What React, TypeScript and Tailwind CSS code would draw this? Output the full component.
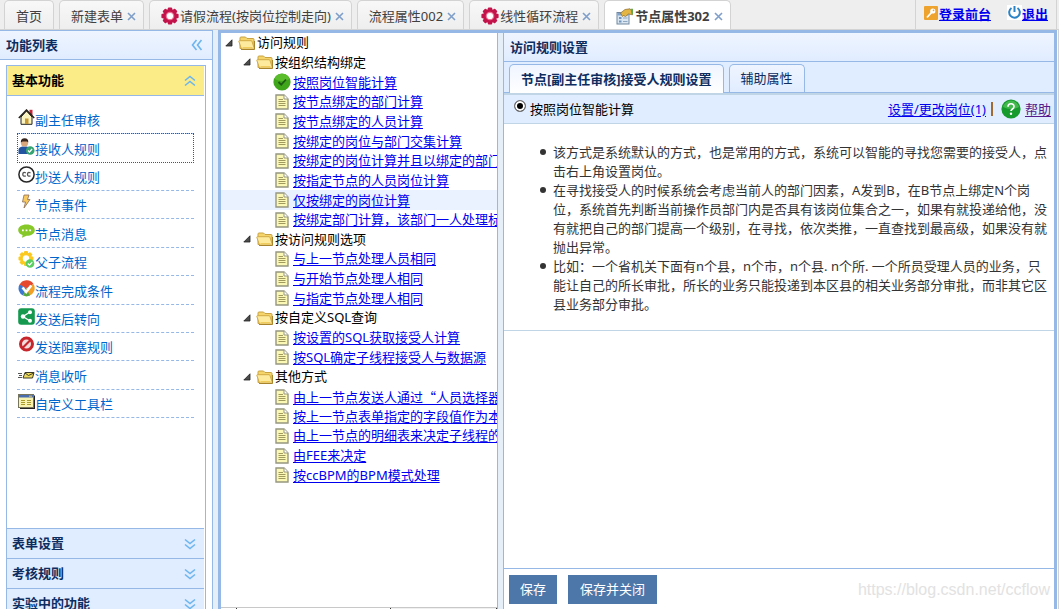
import type { ReactNode } from "react";

function Gear() {
  return (
    <svg viewBox="0 0 18 18" className="h-[18px] w-[18px] shrink-0" aria-hidden="true">
      <g fill="#c3134b">
        {[0, 45, 90, 135].map((a) => (
          <rect key={a} x="6.8" y="0.4" width="4.4" height="17.2" rx="1" transform={`rotate(${a} 9 9)`} />
        ))}
        <circle cx="9" cy="9" r="7" />
      </g>
      <circle cx="9" cy="9" r="4.3" fill="#ee7397" />
      <circle cx="9" cy="9" r="3.1" fill="#fff" />
    </svg>
  );
}

function PropertyIcon() {
  return (
    <svg viewBox="0 0 17 17" className="h-[17px] w-[17px] shrink-0" aria-hidden="true">
      <rect x="1" y="4.500" width="12" height="11.500" fill="#dbe6f3" stroke="#71879f" />
      <rect x="1.500" y="5" width="11" height="2.500" fill="#7fa3d0" />
      <path d="M3 9h2.500v2H3zM3 12.500h2.500v2H3z" fill="#6f95bf" />
      <path d="M7 10h4.500M7 13.500h4.500" stroke="#8fa8c2" />
      <path d="M4.500 5L9 1.500 14 .8l2.500 3v3l-4-.8-3 2.500-2-1-1 1z" fill="#e3b545" stroke="#8a6a2b" strokeWidth=".7" />
      <path d="M14.500.8H17v5.400h-1.500z" fill="#65a84b" />
    </svg>
  );
}

function CloseX() {
  return (
    <svg viewBox="0 0 9 9" className="h-[9px] w-[9px]" aria-hidden="true">
      <path d="M1 1l7 7M8 1L1 8" stroke="#7f9fca" strokeWidth="1.6" />
    </svg>
  );
}

function Chevrons({ turn = "" }: { turn?: string }) {
  return (
    <svg viewBox="0 0 12 12" className={`h-3 w-3 ${turn}`} fill="none" stroke="#6cb5ee" strokeWidth="1.6" aria-hidden="true">
      <path d="M1 1.500l5 4 5-4M1 6.500l5 4 5-4" />
    </svg>
  );
}

function Folder() {
  return (
    <svg viewBox="0 0 18 16" className="h-4 w-[18px] shrink-0" aria-hidden="true">
      <path d="M2 13.500V3q0-1 1-1h4.500l1.500 1.500h6q1 0 1 1V13z" fill="#f5d469" stroke="#c9a243" />
      <path d="M.8 6.300q0-.6.600-.6H13q.8 0 1 .8L16.500 14H3.500z" fill="#fdea9c" stroke="#d0aa46" />
      <path d="M4.500 12.500h10" stroke="#f0cc5c" />
      <path d="M3 14.500h13.500V6" fill="none" stroke="#a8842c" />
    </svg>
  );
}

function FileIcon() {
  return (
    <svg viewBox="0 0 14 16" className="mx-0.5 h-4 w-[14px] shrink-0" aria-hidden="true">
      <path d="M1 1h8L13 5v10H1z" fill="#fbf7b4" stroke="#97977f" strokeWidth="1.4" />
      <path d="M9 1v4h4" fill="#fff" stroke="#97977f" />
      <path d="M3.500 5.500H8M3.500 7.500h7M3.500 9.500h7M3.500 11.500h7" stroke="#968f55" strokeWidth=".9" />
    </svg>
  );
}

function OkIcon() {
  return (
    <svg viewBox="0 0 18 18" className="h-[18px] w-[18px] shrink-0" aria-hidden="true">
      <circle cx="9" cy="9" r="8.600" fill="#3fa51a" />
      <path d="M1.500 6a8 8 0 0 1 15 0q-7.500 4-15 0z" fill="#5bbd2c" />
      <path d="M5.500 9l2.700 2.700L13 6.500" fill="none" stroke="#1d5c12" strokeWidth="1.800" />
    </svg>
  );
}

const menu: { text: string; icon: ReactNode }[] = [
  {
    text: "副主任审核",
    icon: (
      <>
        <path d="M11.500.8h3v6h-3z" fill="#c2253a" />
        <path d="M3 8l5.500-6L14 8v7.300H3z" fill="#fbf3c0" stroke="#222" />
        <path d="M.8 9l7.700-8 7.700 8" fill="none" stroke="#27221c" strokeWidth="1.500" />
        <path d="M7 9.500h3.500V15H7z" fill="#c89a36" />
      </>
    ),
  },
  {
    text: "接收人规则",
    icon: (
      <>
        <path d="M.5 16V12q0-3 4-3.500h4Q12.500 9 12.500 13v3z" fill="#2454a0" />
        <circle cx="6.500" cy="5" r="3.600" fill="#d9a77c" />
        <path d="M2.800 4.500Q2.800.3 6.600.3t3.700 4.200L9 3.500H4.500z" fill="#34241c" />
        <circle cx="12.200" cy="12.500" r="4.300" fill="#35a372" />
        <path d="M10 12.500l1.500 1.500 2.600-3" fill="none" stroke="#fff" strokeWidth="1.200" />
      </>
    ),
  },
  {
    text: "抄送人规则",
    icon: (
      <>
        <circle cx="8.500" cy="8.500" r="7.600" fill="#fff" stroke="#262626" strokeWidth="1.500" />
        <path d="M7.800 6.800q-3-1.200-3 1.500t3 1.500M12.500 6.800q-3-1.200-3 1.500t3 1.500" fill="none" stroke="#555" strokeWidth="1.300" />
      </>
    ),
  },
  {
    text: "节点事件",
    icon: <path d="M6 1h5L9.500 5.500H12L6 14l1.500-6H4.500z" fill="#f8c95e" stroke="#8b6c55" strokeWidth=".8" />,
  },
  {
    text: "节点消息",
    icon: (
      <>
        <path d="M8.500 1.500c5 0 8.300 2.300 8.300 5.700s-3.500 5.600-8.300 5.600l-4.500 2 .6-2.700C2 11.300.2 9.500.2 7.200c0-3.400 3.300-5.700 8.300-5.700z" fill="#86c827" />
        <path d="M4 6.500h1.800v1.800H4zM7.600 6.500h1.800v1.800H7.600zM11.200 6.500H13v1.800h-1.800z" fill="#fff" />
      </>
    ),
  },
  {
    text: "父子流程",
    icon: (
      <>
        <g fill="#fbc91f">
          {[0, 45, 90, 135].map((a) => (
            <rect key={a} x="6" y="0" width="4" height="15" rx="1" transform={`rotate(${a} 8 7.500)`} />
          ))}
          <circle cx="8" cy="7.500" r="6" />
        </g>
        <circle cx="8" cy="7.500" r="3.200" fill="#fff" />
        <circle cx="12" cy="12.500" r="4.300" fill="#59cf62" />
        <path d="M9.800 12.500l1.700 1.600 2.700-3" fill="none" stroke="#fff" strokeWidth="1.200" />
      </>
    ),
  },
  {
    text: "流程完成条件",
    icon: (
      <>
        <path d="M8.500 8.500L1.500 5A8 8 0 0 1 15.500 4z" fill="#e5482d" />
        <path d="M8.500 8.500L1.500 4.500a8 8 0 0 0 3.500 11z" fill="#3c78cf" />
        <path d="M8.500 8.500L15.500 4a8 8 0 0 1-4.500 11.800z" fill="#f2a126" />
        <path d="M8.500 8.500L5 15.600q3.500 1.600 7 0z" fill="#55a83c" />
        <path d="M4.500 7.500l3.700 4.500 5-6.500" fill="none" stroke="#fff" strokeWidth="2.600" />
      </>
    ),
  },
  {
    text: "发送后转向",
    icon: (
      <>
        <rect x=".2" y=".2" width="16.600" height="16.600" rx="3" fill="#14994f" />
        <path d="M12 4L5 8.500 12 13" fill="none" stroke="#fff" strokeWidth="1.300" />
        <g fill="#fff">
          <circle cx="12" cy="4.200" r="2" />
          <circle cx="5" cy="8.500" r="2.200" />
          <circle cx="12" cy="12.800" r="2" />
        </g>
      </>
    ),
  },
  {
    text: "发送阻塞规则",
    icon: (
      <>
        <circle cx="8.500" cy="8" r="6" fill="#f3dede" stroke="#c7262c" strokeWidth="3" />
        <path d="M4.500 12l8-8" stroke="#c7262c" strokeWidth="2.200" />
      </>
    ),
  },
  {
    text: "消息收听",
    icon: (
      <>
        <path d="M0 8.500h4M1 10.500h3M0 12.500h4" stroke="#555" />
        <path d="M7 7.500h9l-1.500 5.500H5z" fill="#ecd95c" stroke="#3a3a2b" />
        <path d="M7 8l3.500 2.500L16 8" fill="none" stroke="#3a3a2b" />
      </>
    ),
  },
  {
    text: "自定义工具栏",
    icon: (
      <>
        <path d="M2 2.500h15V16H2z" fill="#222" />
        <rect x=".5" y="1.500" width="15" height="13" fill="#f7f2b0" stroke="#77755c" />
        <rect x="1" y="2" width="14" height="2.500" fill="#4a6db0" />
        <path d="M11 3.200h3" stroke="#f5c541" />
        <path d="M3 7.500h4M9 7.500h4M3 9.500h4M9 9.500h4M3 11.500h4M9 11.500h4" stroke="#a89a2c" />
      </>
    ),
  },
];

const tree: { title: string; items: string[] }[] = [
  {
    title: "按组织结构绑定",
    items: [
      "按照岗位智能计算",
      "按节点绑定的部门计算",
      "按节点绑定的人员计算",
      "按绑定的岗位与部门交集计算",
      "按绑定的岗位计算并且以绑定的部门",
      "按指定节点的人员岗位计算",
      "仅按绑定的岗位计算",
      "按绑定部门计算，该部门一人处理标",
    ],
  },
  { title: "按访问规则选项", items: ["与上一节点处理人员相同", "与开始节点处理人相同", "与指定节点处理人相同"] },
  { title: "按自定义SQL查询", items: ["按设置的SQL获取接受人计算", "按SQL确定子线程接受人与数据源"] },
  {
    title: "其他方式",
    items: [
      "由上一节点发送人通过“人员选择器",
      "按上一节点表单指定的字段值作为本",
      "由上一节点的明细表来决定子线程的",
      "由FEE来决定",
      "按ccBPM的BPM模式处理",
    ],
  },
];

const notes = [
  "该方式是系统默认的方式，也是常用的方式，系统可以智能的寻找您需要的接受人，点击右上角设置岗位。",
  "在寻找接受人的时候系统会考虑当前人的部门因素，A发到B，在B节点上绑定N个岗位，系统首先判断当前操作员部门内是否具有该岗位集合之一，如果有就投递给他，没有就把自己的部门提高一个级别，在寻找，依次类推，一直查找到最高级，如果没有就抛出异常。",
  "比如：一个省机关下面有n个县，n个市，n个县. n个所. 一个所员受理人员的业务，只能让自己的所长审批，所长的业务只能投递到本区县的相关业务部分审批，而非其它区县业务部分审批。",
];

function Arrow() {
  return (
    <svg viewBox="0 0 8 8" className="h-2 w-2 shrink-0" aria-hidden="true">
      <path d="M7 .8V7H.8z" fill="#4d4d4d" stroke="#222" strokeWidth=".8" />
    </svg>
  );
}

function Branch({ text }: { text: string }) {
  return (
    <>
      <Arrow />
      <span className="ml-[5px] flex items-center gap-px">
        <Folder />
        {text}
      </span>
    </>
  );
}

function Tab({ text, icon, closable = true, active = false }: { text: string; icon?: ReactNode; closable?: boolean; active?: boolean }) {
  return (
    <div
      className={`flex h-[29px] shrink-0 items-center rounded-t-[5px] border border-b-0 border-[#d3d3d3] pt-0.5 ${
        active ? "bg-white font-bold" : "bg-linear-to-b from-[#f8f8f8] to-[#eeeeee]"
      } ${closable ? "pr-[7px] pl-[11px]" : "px-[11px]"}`}
    >
      <button type="button" className={`flex items-center text-[#404040] ${active ? "gap-0.5" : "gap-px"}`}>
        {icon}
        {text}
      </button>
      {closable && (
        <button type="button" aria-label={`关闭 ${text}`} className={active ? "ml-[5px]" : "ml-1"}>
          <CloseX />
        </button>
      )}
    </div>
  );
}

function Section({ text }: { text: string }) {
  return (
    <button
      type="button"
      className="flex h-[30px] w-full shrink-0 items-center justify-between border-t border-[#95b8e7] bg-[#e0ecff] pr-2 pl-[5px] font-bold text-[#0e2d5f]"
    >
      {text}
      <Chevrons />
    </button>
  );
}

export default function App() {
  return (
    <div
      lang="zh-CN"
      className="flex h-screen flex-col overflow-hidden bg-white font-['Noto_Sans','Noto_Sans_CJK_SC',sans-serif] text-[13px] leading-[19px] whitespace-nowrap text-black"
    >
      <header className="flex h-[30px] shrink-0 justify-between border-b border-[#d3d3d3] bg-[#eeeeee]">
        <nav className="flex gap-[5px] pl-1">
          <Tab text="首页" closable={false} />
          <Tab text="新建表单" />
          <Tab text="请假流程(按岗位控制走向)" icon={<Gear />} />
          <Tab text="流程属性002" />
          <Tab text="线性循环流程" icon={<Gear />} />
          <Tab text="节点属性302" icon={<PropertyIcon />} active />
        </nav>
        <div className="mr-0.5 flex gap-4 border-x border-[#d3d3d3] px-2 font-bold text-[#0000ee]">
          <a href="#front" className="flex items-center gap-px">
            <svg viewBox="0 0 14 14" className="mb-1 h-[14px] w-[14px]" aria-hidden="true">
              <rect width="14" height="14" rx="1" fill="#efa32f" />
              <circle cx="8.800" cy="5" r="2.600" fill="#fff" />
              <path d="M7.500 6.500L3 11.500" stroke="#fff" strokeWidth="1.800" />
              <circle cx="9.500" cy="4.400" r=".8" fill="#efa32f" />
            </svg>
            <span className="underline">登录前台</span>
          </a>
          <a href="#logout" className="flex items-center">
            <svg viewBox="0 0 15 15" className="mb-1 h-[15px] w-[15px] bg-white" fill="none" stroke="#2b83c6" strokeWidth="2" aria-hidden="true">
              <path d="M4.500 3a5.300 5.300 0 1 0 6 0M7.500 1v6" />
            </svg>
            <span className="underline">退出</span>
          </a>
        </div>
      </header>

      <div className="flex min-h-0 flex-1">
        <aside className="flex w-[213px] shrink-0 flex-col border-t border-r border-[#95b8e7]">
          <div className="flex h-[29px] shrink-0 items-center justify-between border-b border-[#95b8e7] bg-linear-to-b from-[#eff5ff] to-[#e0ecff] pr-[9px] pl-1.5 font-bold text-[#0e2d5f]">
            功能列表
            <button type="button" aria-label="收起">
              <Chevrons turn="rotate-90" />
            </button>
          </div>
          <div className="mx-1.5 mt-[5px] flex min-h-0 flex-1 flex-col overflow-hidden border border-b-0 border-[#95b8e7] pr-px">
            <button
              type="button"
              className="flex h-[30px] w-full shrink-0 items-center justify-between border-b border-[#95b8e7] bg-[#fbec88] pr-2 pl-[5px] font-bold"
            >
              基本功能
              <Chevrons turn="rotate-180" />
            </button>
            <ul className="mx-2.5 mt-2.5 grid h-[312px] shrink-0 auto-rows-fr">
              {menu.map((m, i) => (
                <li
                  key={m.text}
                  className={
                    i === 1
                      ? "-mt-px flex items-end border border-dotted border-[#0066cc]"
                      : "flex items-end border-b border-dashed border-[#95b8e7] px-px"
                  }
                >
                  <a href="#item" className="flex items-end text-[#0066cc]">
                    <svg viewBox="0 0 17 17" className="mb-[7px] h-[17px] w-[17px]" aria-hidden="true">
                      {m.icon}
                    </svg>
                    <span className="mb-[3px]">{m.text}</span>
                  </a>
                </li>
              ))}
            </ul>
            <div className="min-h-0 flex-1" />
            <Section text="表单设置" />
            <Section text="考核规则" />
            <div className="h-[21px] shrink-0 overflow-hidden">
              <Section text="实验中的功能" />
            </div>
          </div>
        </aside>

        <div className="w-[5px] shrink-0 bg-[#e6eef8]" />

        <div className="flex min-w-0 flex-1 border-3 border-b-0 border-[#95b8e7]">
          <section className="flex w-[277px] shrink-0 flex-col overflow-hidden border-r border-[#95b8e7]">
            <div className="grid h-[452px] shrink-0 auto-rows-fr">
              <div className="flex items-center pl-1">
                <Branch text="访问规则" />
              </div>
              {tree.flatMap((g, gi) => [
                <div key={g.title} className="flex items-center pl-[22px]">
                  <Branch text={g.title} />
                </div>,
                ...g.items.map((t, i) => (
                  <div key={t} className={gi === 0 && i === 6 ? "flex items-center bg-[#eaf2ff] pl-[52px]" : "flex items-center pl-[52px]"}>
                    {gi === 0 && i === 0 ? <OkIcon /> : <FileIcon />}
                    <a
                      href="#rule"
                      className={`ml-0.5 text-[#0000ee] underline underline-offset-2 ${
                        t.includes("“") ? "font-['Noto_Sans_CJK_SC',sans-serif]" : ""
                      }`}
                    >
                      {t}
                    </a>
                  </div>
                )),
              ])}
            </div>
            <div className="flex-1" />
            <div className="flex h-0.5 shrink-0 border-t border-[#c8c8c8]">
              <div className="w-4 border-r border-[#333]" />
              <div className="w-[154px] border-r border-[#333]" />
              <div className="flex-1 border-r border-[#333] bg-[#f0f0f0]" />
            </div>
          </section>

          <div className="w-[5px] shrink-0 bg-[#e6eef8]" />

          <main className="flex min-w-0 flex-1 flex-col border-l border-[#95b8e7]">
            <h2 className="flex h-[29px] shrink-0 items-center border-b border-[#95b8e7] bg-linear-to-b from-[#eff5ff] to-[#e0ecff] pl-1.5 font-bold text-[#0e2d5f]">
              访问规则设置
            </h2>
            <div className="flex h-[31px] shrink-0 items-end gap-[5px] border-b border-[#95b8e7] bg-[#e0ecff] pl-[5px] text-[#0e2d5f]">
              <button
                type="button"
                className="-mb-px h-[29px] rounded-t-[5px] border border-b-0 border-[#95b8e7] bg-linear-to-b from-[#eff5ff] to-white px-[11px] font-bold"
              >
                节点[副主任审核]接受人规则设置
              </button>
              <button
                type="button"
                className="h-7 rounded-t-[5px] border border-b-0 border-[#95b8e7] bg-linear-to-b from-[#eff5ff] to-[#e0ecff] px-[11px]"
              >
                辅助属性
              </button>
            </div>
            <div className="flex h-[31px] shrink-0 items-center justify-between border-t-2 border-b border-[#c0d5e6] bg-[#e0ecff] pr-[3px] pl-2.5">
              <label className="flex items-center">
                <input
                  type="radio"
                  defaultChecked
                  className="mr-1 mb-1.5 h-3 w-3 appearance-none rounded-full border border-[#777] bg-black shadow-[inset_0_0_0_2px_white]"
                />
                按照岗位智能计算
              </label>
              <span className="flex items-center text-[#0000ee]">
                <a href="#posts" className="underline underline-offset-2">
                  设置/更改岗位(1)
                </a>
                <span className="mx-[5px] h-[14px] w-0.5 bg-[#a06a35]" />
                <svg viewBox="0 0 20 20" className="mr-1 ml-[3px] h-5 w-5" aria-hidden="true">
                  <circle cx="10" cy="10" r="9.600" fill="#159a2b" />
                  <path d="M2 8a8.200 8.200 0 0 1 16 0q-8 4-16 0z" fill="#43b94d" />
                  <path d="M7 7.800q0-3 3-3t3 2.700q0 1.500-1.500 2.500T10 12" fill="none" stroke="#fff" strokeWidth="1.600" />
                  <circle cx="10" cy="14.700" r="1.200" fill="#fff" />
                </svg>
                <a href="#help" className="text-[#551a8b] underline underline-offset-2">
                  帮助
                </a>
              </span>
            </div>
            <ul className="border-b border-[#c0d5e6] pt-[19px] pr-1 pb-4 pl-9 whitespace-normal text-[#333333]">
              {notes.map((n) => (
                <li key={n} className="flex items-start">
                  <span className="mt-[6px] mr-[7px] h-1.5 w-1.5 shrink-0 rounded-full bg-[#333333]" />
                  <p>{n}</p>
                </li>
              ))}
            </ul>
            <div className="min-h-0 flex-1" />
            <footer className="flex h-[41px] shrink-0 items-center justify-between border-t border-[#95b8e7] pt-px pr-1 pl-[5px]">
              <div className="flex gap-[11px] text-white">
                <button type="button" className="h-[29px] bg-[#4d77a9] px-[11px]">
                  保存
                </button>
                <button type="button" className="h-[29px] bg-[#4d77a9] px-3">
                  保存并关闭
                </button>
              </div>
              <span className="font-['Liberation_Sans',sans-serif] text-base text-[#e2e2e2]">https://blog.csdn.net/ccflow</span>
            </footer>
          </main>
        </div>
        <div className="w-0.5 shrink-0 border-r border-[#d3d3d3]" />
      </div>
    </div>
  );
}
